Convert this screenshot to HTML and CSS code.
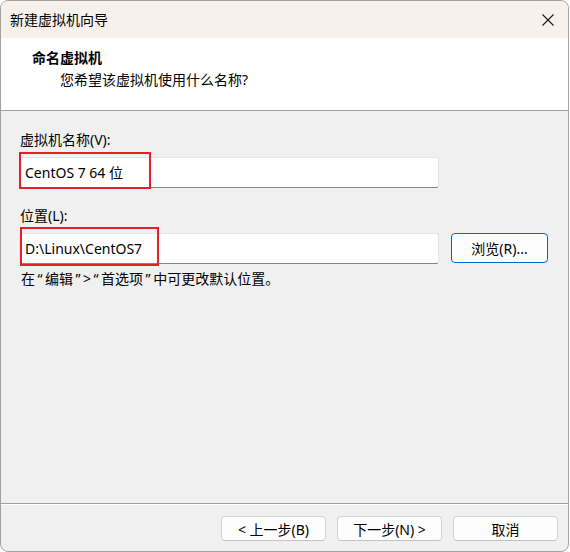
FILE: index.html
```html
<!DOCTYPE html>
<html lang="zh-CN">
<head>
<meta charset="utf-8">
<title>新建虚拟机向导</title>
<link rel="stylesheet" href="styles.css">
</head>
<body>
<div class="window">
  <div class="titlebar">
    <span class="title">新建虚拟机向导</span>
    <svg class="close" width="12" height="12" viewBox="0 0 12 12"><path d="M0.5 0.5 L11.5 11.5 M11.5 0.5 L0.5 11.5" stroke="#1a1a1a" stroke-width="1.1" fill="none"/></svg>
  </div>
  <div class="header">
    <div class="h-title">命名虚拟机</div>
    <div class="h-sub">您希望该虚拟机使用什么名称?</div>
  </div>
  <div class="content">
    <div class="label">虚拟机名称(V):</div>
    <div class="field field-name">
      <div class="input">CentOS 7 64 位</div>
      <div class="mark mark-name"></div>
    </div>
    <div class="label label-loc">位置(L):</div>
    <div class="row">
      <div class="field field-loc">
        <div class="input">D:\Linux\CentOS7</div>
        <div class="mark mark-loc"></div>
      </div>
      <button class="btn btn-browse">浏览(R)...</button>
    </div>
    <div class="hint">在<span class="q">“</span>编辑<span class="q">”</span>&gt;<span class="q">“</span>首选项<span class="q">”</span>中可更改默认位置。</div>
  </div>
  <div class="footer">
    <button class="btn btn-foot">&lt; 上一步(B)</button>
    <button class="btn btn-foot">下一步(N) &gt;</button>
    <button class="btn btn-foot">取消</button>
  </div>
</div>
</body>
</html>
```
FILE: styles.css
```css
* { box-sizing: border-box; }
html, body { margin: 0; padding: 0; background: #ffffff; }
body {
  font-family: "Noto Sans", "Noto Sans CJK SC", sans-serif;
  font-size: 14px;
  color: #000;
}
.window {
  width: 569px;
  height: 552px;
  border: 1px solid #a2a2a2;
  border-radius: 8px;
  overflow: hidden;
  display: flex;
  flex-direction: column;
  background: #f0f0f0;
}
.titlebar {
  height: 37px;
  flex: none;
  background: #f7f0eb;
  display: flex;
  align-items: center;
  justify-content: space-between;
  padding: 0 14px 0 9px;
}
.title { line-height: 20px; }
.close { display: block; }
.header {
  height: 73px;
  flex: none;
  background: #ffffff;
  border-bottom: 1px solid #a0a0a0;
  padding: 9px 0 0 31px;
}
.h-title { font-weight: 700; line-height: 22px; }
.h-sub { line-height: 22px; padding-left: 28px; }
.content {
  flex: 1;
  padding: 19px 0 0 18px;
}
.label { line-height: 20px; padding-left: 1px; margin-bottom: 7px; }
.label-loc { margin-top: 18px; }
.field { position: relative; width: 420px; }
.input {
  height: 31px;
  background: #ffffff;
  border: 1px solid #e6e6e6;
  border-bottom: 1px solid #858585;
  border-radius: 3px;
  padding-left: 5px;
  line-height: 29px;
  white-space: nowrap;
}
.mark {
  position: absolute;
  border: 2px solid #e5202c;
}
.mark-name { left: 0; top: -5px; width: 132px; height: 37px; }
.mark-loc { left: 1px; top: -6px; width: 139px; height: 39px; }
.row { display: flex; align-items: flex-start; gap: 12px; }
.btn {
  font-family: inherit;
  font-size: 14px;
  color: #000;
  background: #fdfdfd;
  border: 1px solid #d3d3d3;
  border-bottom-color: #c2c2c2;
  border-radius: 4px;
  padding: 0;
  margin: 0;
}
.btn-browse {
  width: 97px;
  height: 30px;
  border: 1px solid #0067c0;
  border-radius: 4px;
}
.hint { line-height: 20px; margin-top: 5px; padding-left: 2px; }
.q { padding: 0 2.5px; }
.footer {
  flex: none;
  height: 48px;
  border-top: 1px solid #a0a0a0;
  box-shadow: inset 0 1px 0 #ffffff;
  display: flex;
  justify-content: flex-end;
  align-items: flex-start;
  gap: 11px;
  padding: 12px 10px 0 0;
}
.btn-foot { width: 105px; height: 25px; }
```
